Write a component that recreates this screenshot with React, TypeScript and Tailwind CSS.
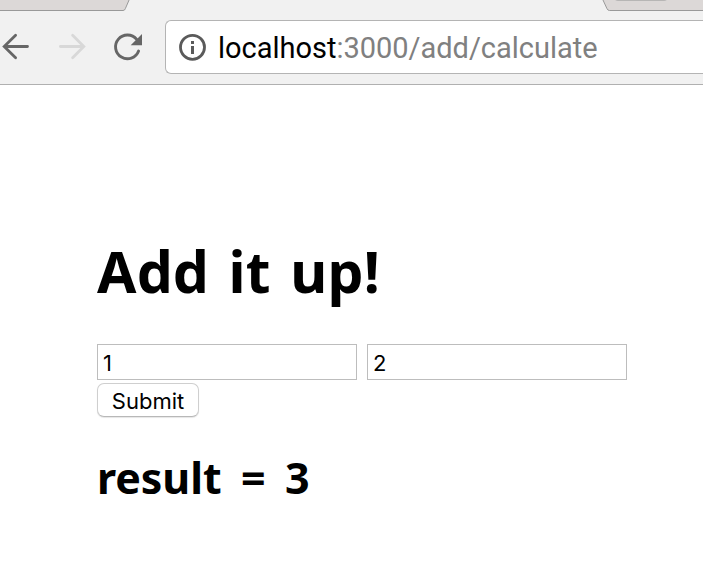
import { useState } from "react";

function BackIcon() {
  return (
    <svg width="32" height="32" viewBox="0 0 32 32" fill="none" stroke="#666" strokeWidth="2.8" strokeLinecap="round" className="block shrink-0">
      <path d="M27.5 15.5H4.5M15.6 4.3 4.2 15.5l11.4 11.2" />
    </svg>
  );
}

function ForwardIcon() {
  return (
    <svg width="32" height="32" viewBox="0 0 32 32" fill="none" stroke="#d8d8d8" strokeWidth="2.8" strokeLinecap="round" className="block shrink-0">
      <path d="M4.4 15.5h23M16.6 4.3l11.2 11.2-11.2 11.2" />
    </svg>
  );
}

function ReloadIcon() {
  return (
    <svg width="32" height="32" viewBox="0 0 32 32" className="block shrink-0">
      <path d="M26.6 20A11.9 11.9 0 1 1 24.7 8.4" fill="none" stroke="#666" strokeWidth="2.9" strokeLinecap="round" />
      <path d="M30 3v11.3H18.7z" fill="#666" />
    </svg>
  );
}

function InfoIcon() {
  return (
    <svg width="28" height="28" viewBox="0 0 28 28" className="block shrink-0">
      <circle cx="14.5" cy="14.3" r="12" fill="none" stroke="#5a5a5a" strokeWidth="2.8" />
      <path d="M13 8h3v3h-3zM13 13h3v8h-3z" fill="#5a5a5a" />
    </svg>
  );
}

function TabStrip() {
  return (
    <svg width="703" height="12" viewBox="0 0 703 12" className="block shrink-0">
      <path d="M-1-1H129.5L125.3 8.7Q124.8 10.5 123 10.5H-1z" fill="#dcd8d7" stroke="#999" />
      <path d="M602.5-1 607 8.7Q607.8 10.5 609.5 10.5H705V-1z" fill="#dcd8d7" stroke="#999" />
      <path d="M614-1H668Q666.5 0.8 664 0.8H618Q615.5 0.8 614-1z" fill="#aaa" />
    </svg>
  );
}

function Toolbar() {
  return (
    <header className="h-[85px] overflow-hidden border-b border-[#b0b0b0] bg-[#f1f1f1]">
      <TabStrip />
      <div className="flex h-[70px] items-center">
        <div className="flex w-[165px] shrink-0 gap-6">
          <BackIcon />
          <ForwardIcon />
          <ReloadIcon />
        </div>
        <div className="flex h-[54px] grow items-center gap-[12px] rounded-l-md border border-r-0 border-[#b4b4b4] bg-white pl-3">
          <InfoIcon />
          <span className="whitespace-nowrap pt-0.5 font-[Roboto,sans-serif] text-[29px] leading-[52px] tracking-[-0.02px] text-[#808080]">
            <span className="text-black">localhost</span>:3000/add/calculate
          </span>
        </div>
      </div>
    </header>
  );
}

function NumberField({ initial }: { initial: string }) {
  const [value, setValue] = useState(initial);
  return (
    <input
      value={value}
      onChange={(event) => setValue(event.target.value)}
      className="h-9 w-[260px] border border-[#bdbdbd] bg-white px-[5px] pt-0.5 font-[Inter,sans-serif] text-[22px] text-black outline-none"
    />
  );
}

export default function App() {
  return (
    <div className="h-[561px] w-[703px] overflow-hidden bg-white text-black">
      <Toolbar />
      <main className="pl-[97px] pt-[151px]">
        <h1 className="h-[70px] whitespace-nowrap font-['Noto_Sans',sans-serif] text-[57px] font-bold leading-[70px] tracking-[0.2px] [word-spacing:4.5px]">
          Add it up!
        </h1>
        <form className="mt-[38px]" onSubmit={(event) => event.preventDefault()}>
          <div className="flex gap-2.5">
            <NumberField initial="1" />
            <NumberField initial="2" />
          </div>
          <button className="mt-[3px] block h-[34px] w-[102px] rounded-[7px] border border-[#cfcfcf] border-b-[#b8b8b8] bg-white pt-0.5 font-[Inter,sans-serif] text-[22px] leading-[30px] shadow-[0_1px_1px_#0000001a]">
            Submit
          </button>
        </form>
        <h2 className="mt-[31px] h-[60px] whitespace-nowrap font-['Noto_Sans',sans-serif] text-[43px] font-bold leading-[60px] tracking-[-0.1px] [word-spacing:8.5px]">
          result = 3
        </h2>
      </main>
    </div>
  );
}
